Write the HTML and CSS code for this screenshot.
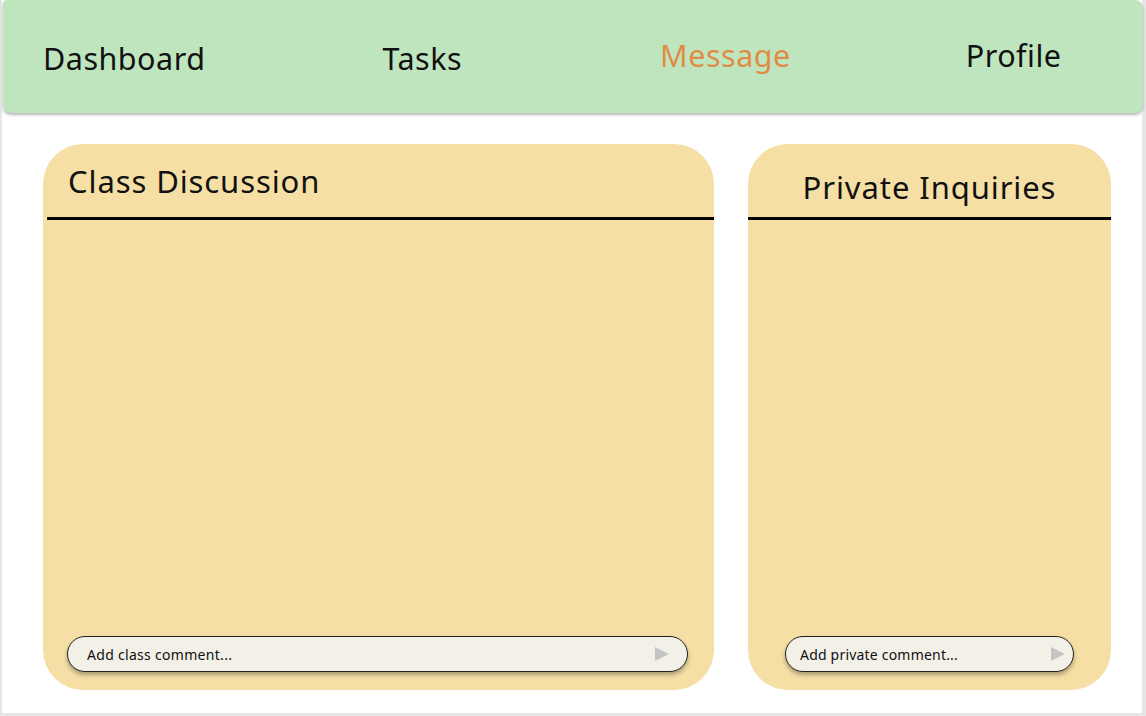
FILE: index.html
```html
<!DOCTYPE html>
<html lang="en">
<head>
<meta charset="utf-8">
<title>Messages</title>
<link rel="stylesheet" href="styles.css">
</head>
<body>
<div class="page">
  <nav class="navbar">
    <a class="nav-item nav-dashboard" href="#">Dashboard</a>
    <a class="nav-item nav-tasks" href="#">Tasks</a>
    <a class="nav-item nav-message active" href="#">Message</a>
    <a class="nav-item nav-profile" href="#">Profile</a>
  </nav>
  <main class="content">
    <section class="card card-class">
      <header class="card-head head-left">
        <h2 class="card-title">Class Discussion</h2>
      </header>
      <div class="rule rule-left"></div>
      <div class="card-body"></div>
      <div class="comment comment-class">
        <span class="placeholder placeholder-class">Add class comment...</span>
        <svg class="send" width="14" height="14" viewBox="0 0 14 14"><polygon points="0,0 14,7 0,14" fill="#c4c4c4"/></svg>
      </div>
    </section>
    <section class="card card-private">
      <header class="card-head head-center">
        <h2 class="card-title">Private Inquiries</h2>
      </header>
      <div class="rule"></div>
      <div class="card-body"></div>
      <div class="comment comment-private">
        <span class="placeholder">Add private comment...</span>
        <svg class="send" width="14" height="14" viewBox="0 0 14 14"><polygon points="0,0 14,7 0,14" fill="#c4c4c4"/></svg>
      </div>
    </section>
  </main>
</div>
</body>
</html>
```
FILE: styles.css
```css
* { box-sizing: border-box; }
html, body { margin: 0; padding: 0; }
body {
  background: #e6e6e6;
  font-family: "Noto Sans", "DejaVu Sans", sans-serif;
  width: 1146px;
  height: 716px;
  overflow: hidden;
}
.page {
  margin: 0 4px 0 2px;
  width: 1140px;
  height: 713px;
  background: #ffffff;
  display: flex;
  flex-direction: column;
}
.navbar {
  margin-left: 1px;
  width: 1140px;
  height: 113px;
  background: #bfe5bf;
  border-radius: 4px 8px 8px 8px;
  box-shadow: 0 2px 3px rgba(0,0,0,0.28);
  display: flex;
  align-items: flex-start;
  padding-left: 40px;
  position: relative;
  z-index: 1;
}
.nav-item {
  font-size: 30.5px;
  color: #111;
  text-decoration: none;
  letter-spacing: 0.5px;
  line-height: 1;
}
.nav-item.active { color: #e08c45; }
.nav-dashboard { margin-top: 43px; }
.nav-tasks { margin-top: 43px; margin-left: 177px; }
.nav-message { margin-top: 40px; margin-left: 198px; }
.nav-profile { margin-top: 40px; margin-left: 175px; }

.content {
  flex: 1;
  display: flex;
  gap: 34px;
  padding: 31px 31px 23px 41px;
}
.card {
  background: #f5dfa5;
  border-radius: 40px;
  display: flex;
  flex-direction: column;
}
.card-class { width: 671px; }
.card-private { width: 363px; }
.card-head { height: 73px; }
.head-left { padding: 22px 0 0 25px; }
.head-center { padding: 28px 0 0 0; text-align: center; }
.card-title {
  margin: 0;
  font-weight: 400;
  font-size: 31px;
  line-height: 1;
  letter-spacing: 0.9px;
  color: #111;
}
.rule {
  height: 3px;
  background: #050505;
}
.rule-left { margin-left: 4px; }
.card-body { flex: 1; }
.comment {
  height: 36px;
  margin-bottom: 18px;
  background: #f3f0e8;
  border: 1px solid #222;
  border-radius: 18px;
  box-shadow: 0 3px 4px rgba(0,0,0,0.3);
  display: flex;
  align-items: center;
  justify-content: space-between;
}
.comment-class { margin-left: 24px; margin-right: 26px; padding: 0 18px 0 19px; }
.comment-private { margin-left: 37px; margin-right: 37px; padding: 0 8px 0 14px; }
.placeholder {
  font-size: 14px;
  color: #111;
  letter-spacing: 0.2px;
}
.placeholder-class { letter-spacing: 0.3px; }
.send { display: block; }
```
